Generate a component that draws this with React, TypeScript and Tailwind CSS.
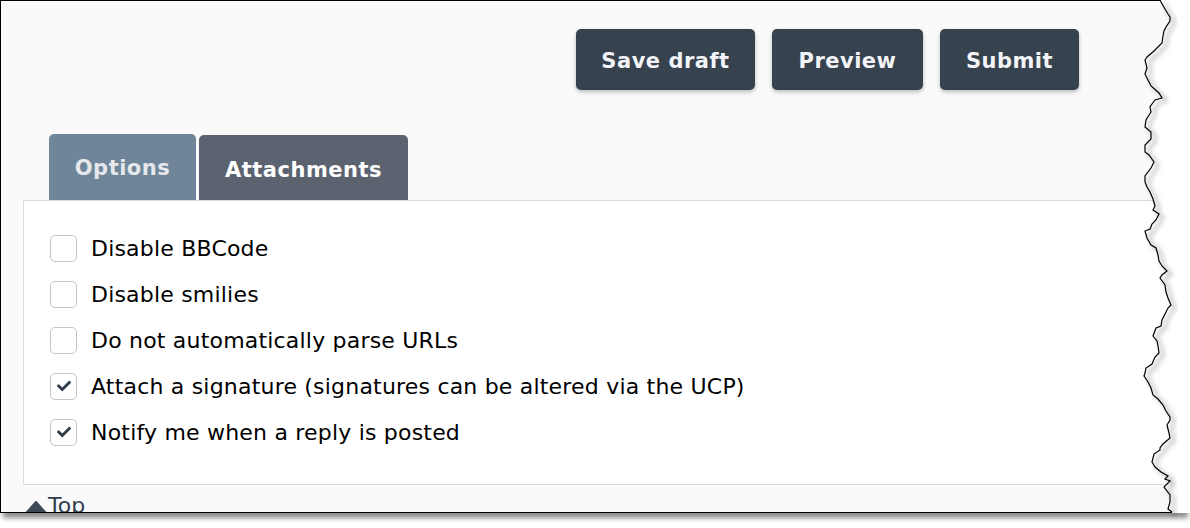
import { FaCheck } from "react-icons/fa"

const options = [
  { label: "Disable BBCode", checked: false },
  { label: "Disable smilies", checked: false },
  { label: "Do not automatically parse URLs", checked: false },
  { label: "Attach a signature (signatures can be altered via the UCP)", checked: true },
  { label: "Notify me when a reply is posted", checked: true },
]

// deterministic jagged edge for the "torn paper" look
const tornEdge = () => {
  let seed = 11
  const rand = () => {
    seed = (seed * 16807) % 2147483647
    return (seed - 1) / 2147483646
  }
  const pts: [number, number][] = [[1160, 0]]
  let x = 1160
  let y = 0
  let dir = 1
  while (y < 505) {
    y += 2 + Math.round(rand() * 6)
    if (rand() < 0.25) dir = -dir
    x += dir * Math.round(1 + rand() * 5) + Math.round((rand() - 0.5) * 4)
    if (x < 1144) {
      x = 1145
      dir = 1
    }
    if (x > 1171) {
      x = 1170
      dir = -1
    }
    pts.push([x, Math.min(y, 512)])
  }
  pts.push([1172, 512])
  return pts
}

const Checkbox = ({ checked }: { checked: boolean }) => (
  <span className="flex h-[27px] w-[27px] flex-none items-center justify-center rounded-[5px] border border-[#c6c6c6] bg-white">
    {checked && <FaCheck className="h-[14px] w-[14px] text-[#2f3b48]" />}
  </span>
)

export default function App() {
  const pts = tornEdge()
  const line = pts.map(([x, y]) => `${x},${y}`).join(" ")
  const fill = `M${pts.map(([x, y]) => `${x},${y}`).join(" L")} L1172,513 L1190,513 L1190,0 Z`

  return (
    <div className="relative h-[528px] w-[1190px] overflow-hidden bg-white font-['DejaVu_Sans',sans-serif]">
      <div className="h-[513px] w-[1185px] overflow-hidden border border-r-0 border-black bg-[#fafafa] shadow-[3px_5px_5px_rgba(0,0,0,0.45)]">
        <div className="flex gap-[17px] pl-[575px] pt-[28px]">
          {["Save draft", "Preview", "Submit"].map((b, i) => (
            <button
              key={b}
              className={
                "flex h-[61px] items-center justify-center rounded-[5px] bg-[#37424f] pt-[5px] text-[21px] font-bold tracking-[0.5px] text-[#f2f4f7] shadow-[0_2px_4px_rgba(0,0,0,0.25)] " +
                (i === 0 ? "w-[179px]" : i === 1 ? "w-[151px]" : "w-[139px]")
              }
            >
              {b}
            </button>
          ))}
        </div>

        <div className="mt-[44px] flex items-end gap-[3px] pl-[48px]">
          <div className="flex h-[66px] w-[147px] items-center justify-center rounded-t-[5px] bg-[#6f8599] pt-[4px] text-[21px] font-bold tracking-[0.5px] text-[#e6e8eb]">
            Options
          </div>
          <div className="flex h-[65px] w-[209px] items-center justify-center rounded-t-[5px] bg-[#5c6370] pt-[6px] text-[21px] font-bold tracking-[0.5px] text-white">
            Attachments
          </div>
        </div>

        <div className="ml-[22px] h-[285px] w-[1200px] border border-[#dcdcdc] bg-white pl-[26px] pt-[24px]">
          {options.map((o) => (
            <label key={o.label} className="flex h-[46px] items-center gap-[14px] text-[22px] tracking-[0.2px] text-black">
              <Checkbox checked={o.checked} />
              <span>{o.label}</span>
            </label>
          ))}
        </div>

        <div className="mt-[4px] flex items-center gap-[2px] pl-[25px] text-[22px] text-[#2f3d4c]">
          <svg width="20" height="20" viewBox="0 0 20 20" className="mt-[6px]">
            <path d="M10 3 L19 13 L1 13 Z" fill="#3d4854" strokeLinejoin="round" stroke="#3d4854" strokeWidth="2" />
          </svg>
          <span>Top</span>
        </div>
      </div>

      <svg className="pointer-events-none absolute left-0 top-0" width="1190" height="528" viewBox="0 0 1190 528">
        <defs>
          <filter id="tornShadow" x="-10%" y="-10%" width="130%" height="130%">
            <feDropShadow dx="4" dy="3" stdDeviation="2.5" floodColor="#000" floodOpacity="0.6" />
          </filter>
        </defs>
        <path d={fill} fill="#fff" />
        <polyline points={line} fill="none" stroke="#000" strokeWidth="1.2" filter="url(#tornShadow)" />
      </svg>
    </div>
  )
}
